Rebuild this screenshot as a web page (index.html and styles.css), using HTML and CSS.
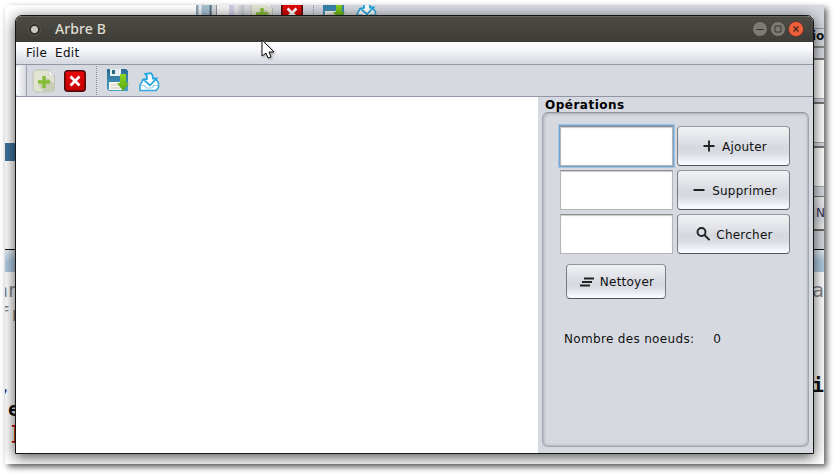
FILE: index.html
```html
<!DOCTYPE html>
<html lang="fr">
<head>
<meta charset="utf-8">
<title>Arbre B</title>
<link rel="stylesheet" href="styles.css">
</head>
<body>
<svg class="defs" aria-hidden="true">
  <defs>
    <linearGradient id="blue" x2="0" y2="1"><stop stop-color="#286b94"/><stop offset="1" stop-color="#4ba1c5"/></linearGradient>
    <linearGradient id="green" x2="0" y2="1"><stop stop-color="#8ed321"/><stop offset="1" stop-color="#58a914"/></linearGradient>
    <linearGradient id="red" x2="0" y2="1"><stop stop-color="#e80808"/><stop offset="1" stop-color="#c40000"/></linearGradient>
  </defs>
  <symbol id="new" viewBox="0 0 24 26">
    <path d="M4.500 2h12l6 6v12q0 4-4 4H5q-4 0-4-4V6q0-4 3.500-4z" fill="#e2e4d2" stroke="#b3b7ad" stroke-width=".8"/>
    <path d="M16 10l6.500 6v4q0 3.500-4 3.500h-7l-5-6 4-2v-5z" fill="#c9ccb5"/>
    <path d="M16.500 2l6 6-5-1z" fill="#fff" stroke="#c1c4c0" stroke-width=".6"/>
    <path d="M12 8v12M6 14h12" stroke="#86bd37" stroke-width="3.400"/>
  </symbol>
  <symbol id="close" viewBox="0 0 22 22">
    <rect x=".8" y=".8" width="20.400" height="20.400" rx="3" fill="url(#red)" stroke="#4b0909" stroke-width="1.500"/>
    <path d="M6.500 6.500l9 9M15.500 6.500l-9 9" stroke="#fff" stroke-width="2.800"/>
  </symbol>
  <symbol id="save" viewBox="0 0 24 24">
    <path d="M1 1h19l2 2v20H3l-2-2z" fill="url(#blue)"/>
    <path d="M4 1h11v7H4z" fill="#e8edef"/><path d="M6 2h3v4H6z" fill="#286987"/>
    <path d="M3 14h13v8H3z" fill="#f6f5ed"/><path d="M5 17h9M5 20h9" stroke="#c7c7bd"/>
    <path d="M14 6h6v9h3l-6 8-6-8h3z" fill="url(#green)"/>
  </symbol>
  <symbol id="export" viewBox="0 0 22 20">
    <path d="M5 8L2 13v5.500h16l2.500-3V11l-3-4.500" fill="#fff" stroke="#35a7dc" stroke-width="1.600"/>
    <path d="M2.500 13.500h4l1.500 2.500h6l1.500-2.500h5" fill="none" stroke="#8bcceb" stroke-width="1.200"/>
    <path d="M7.500 2l5.500-.8q2 1.500 2 5.300h3.500l-6.500 6.800-6.500-5.800 3.500-.5q.5-3-1.500-5z" fill="#fff" stroke="#22a5df" stroke-width="1.800"/>
  </symbol>
</svg>

<div class="desktop">
  <div class="strip">
    <i class="scroll"></i><i class="grip"></i>
    <svg class="s-new"><use href="#new"/></svg><svg class="s-close"><use href="#close"/></svg>
    <i class="s-dots"></i><svg class="s-save"><use href="#save"/></svg><svg class="s-export"><use href="#export"/></svg>
  </div>
  <div class="side">
    <b class="heading">io</b>
    <i class="cell c1"></i><i class="cell c2"></i><i class="cell c3"></i><i class="cell c4"></i>
    <span class="clipped">N</span>
  </div>
  <i class="selection"></i>
  <i class="band left"></i><i class="band right"></i>
  <span class="code gray an">an</span><span class="code gray fr">fr</span>
  <span class="code comma">,</span><span class="code e">e</span><span class="code bracket">;]</span>
  <span class="code gray a">a</span><span class="code i">i</span>
</div>

<main class="window">
  <header class="titlebar">
    <span class="orb"></span><h1>Arbre B</h1>
    <div class="controls">
      <svg viewBox="0 0 16 16"><circle cx="8" cy="8" r="7.500"/><path d="M4.500 8.500h7"/></svg>
      <svg viewBox="0 0 16 16"><circle cx="8" cy="8" r="7.500"/><path d="M5 5h6v6H5z"/></svg>
      <svg class="quit" viewBox="0 0 16 16"><circle cx="8" cy="8" r="7.500"/><path d="M5.500 5.500l5 5M10.500 5.500l-5 5"/></svg>
    </div>
  </header>
  <nav class="menu"><span>File</span><span>Edit</span></nav>
  <div class="toolbar">
    <i class="handle"></i>
    <svg class="new"><use href="#new"/></svg><svg class="close"><use href="#close"/></svg>
    <i class="dots"></i>
    <svg class="save"><use href="#save"/></svg><svg class="export"><use href="#export"/></svg>
  </div>
  <div class="content">
    <section class="canvas"></section>
    <aside class="operations">
      <h2>Opérations</h2>
      <div class="group">
        <div class="row"><input class="focused" aria-label="Ajouter"><button><svg viewBox="0 0 14 14"><path d="M7 1.500v11M1.500 7h11"/></svg>Ajouter</button></div>
        <div class="row"><input aria-label="Supprimer"><button><svg viewBox="0 0 14 14"><path d="M1.500 7h11"/></svg>Supprimer</button></div>
        <div class="row"><input aria-label="Chercher"><button><svg viewBox="0 0 14 14"><circle cx="5.500" cy="5" r="4"/><path d="M8.500 8l5 5"/></svg>Chercher</button></div>
        <button class="clear"><svg viewBox="0 0 14 14"><path d="M4 3.500h10M2 7h10M0 10.500h10"/></svg>Nettoyer</button>
        <p class="count"><span>Nombre des noeuds:</span><span>0</span></p>
      </div>
    </aside>
  </div>
</main>
<svg class="pointer" viewBox="0 0 13 20"><path d="M1 1v16l4-3 2 5 3-1-2-5h5z"/></svg>
</body>
</html>
```

FILE: styles.css
```css
* { box-sizing: border-box; }
body { margin: 0; width: 833px; height: 473px; overflow: hidden; position: relative; background: #fff; font: 12px "DejaVu Sans", sans-serif; color: #111; }
.defs { position: absolute; width: 0; height: 0; }
i { display: block; }

/* Desktop visible around the edges of the window */
.desktop { position: absolute; left: 5px; top: 5px; width: 819px; height: 459px; background: #fff; box-shadow: 3px 3px 6px rgba(0,0,0,.6); }
.desktop > *, .strip > *, .side > * { position: absolute; }
.strip { left: 191px; top: 0; width: 628px; height: 11px; overflow: hidden; background: #d6d9e0; }
.scroll { left: 0; top: 0; width: 21px; height: 11px; background: linear-gradient(90deg, #8fa4b5 0 2px, #eef2f6 3px 5px, #a5bfd1 6px 13px, #345064 15px, #d7dade 16px 20px, #8c96a2 20px); }
.grip { left: 21px; top: 0; width: 27px; height: 11px; background: linear-gradient(90deg, #f5f5f5 0 12px, #d0cee4 12px 17px, #eee 18px, #c4c6cc 26px); }
.s-new { left: 54px; top: -5px; width: 24px; height: 26px; }
.s-close { left: 85px; top: -3px; width: 22px; height: 22px; }
.s-dots { left: 117px; top: 0; height: 11px; border-left: 1px dotted #888d99; }
.s-save { left: 126px; top: -8px; width: 24px; height: 24px; }
.s-export { left: 159px; top: -4px; width: 22px; height: 20px; }
.side { left: 808px; top: 11px; width: 11px; height: 233px; overflow: hidden; background: #d6d9e0; }
.side::before { content: ""; position: absolute; top: 12px; width: 11px; height: 17px; border-top: 1px solid #9297a7; border-bottom: 2px solid #888; }
.heading { left: -1px; top: 13px; width: 12px; font-size: 12px; line-height: 15px; overflow: hidden; }
.cell { left: 0; width: 11px; height: 41px; border: 0 solid #aaa; border-top: 2px solid #777; border-bottom-width: 1px; background: #fff; }
.c1 { top: 42px; }
.c2 { top: 86px; }
.c3 { top: 130px; }
.c4 { top: 180px; height: 35px; background: linear-gradient(#f1f1f3, #d5d8df 60%, #eee); border-top-width: 1px; border-bottom: 2px solid #666; }
.clipped { left: 3px; top: 190px; width: 8px; line-height: 15px; overflow: hidden; color: #335; }
.selection { left: 0; top: 138px; width: 11px; height: 18px; background: #3f739b; }
.band { top: 244px; width: 11px; height: 23px; border-top: 1px solid #111; background: linear-gradient(#e5edf2, #b0cae0 50%); }
.left { left: 0; }
.right { left: 808px; }
.code { left: 0; width: 12px; height: 24px; font: 20px/24px "DejaVu Sans Mono", monospace; overflow: hidden; white-space: nowrap; }
.gray { color: #85858c; }
.an { top: 273px; text-indent: -9px; }
.fr { top: 297px; text-indent: -7px; }
.comma { top: 368px; text-indent: -6px; color: #236; }
.e { left: 3px; top: 392px; font-weight: bold; }
.code.bracket { top: 416px; text-indent: -8px; color: #c8000a; font-weight: bold; }
.a { left: 807px; top: 273px; }
.i { left: 807px; top: 368px; font-weight: bold; }

/* Application window */
.window { position: absolute; left: 15px; top: 15px; width: 799px; height: 439px; border: 1px solid #151515; border-radius: 7px 7px 0 0; overflow: clip; background: #d6d9e0; display: flex; flex-direction: column; box-shadow: 0 3px 14px rgba(0,0,0,.7); }
.titlebar { height: 26px; flex: none; background: linear-gradient(#4d4b44, #3d3c37); border-top: 1px solid #68665c; display: flex; align-items: center; padding: 0 9px 0 12px; color: #dfdbd2; }
.orb { width: 13px; height: 13px; border-radius: 50%; background: radial-gradient(circle, #cbc8c2 0 3px, #34332f 4px 5px, #55534d 6px); }
h1 { margin: -2px auto 0 14px; font: 500 14px/22px "Noto Sans", sans-serif; letter-spacing: .1px; }
.controls { display: flex; gap: 2px; margin-top: -1px; }
.controls svg { width: 16px; height: 16px; fill: #7c7a73; stroke: #35342f; stroke-width: 1; }
.controls .quit { fill: #ed6039; stroke: #54291e; }
.controls circle { stroke-width: .6; }
.controls .quit path { stroke-width: 1.5; }
.menu { height: 23px; flex: none; border-bottom: 1px solid #9297a6; background: linear-gradient(#fff 0, #f7f8fa 35%, #d8dbe2 90%); display: flex; gap: 8px; padding: 3px 10px; line-height: 16px; letter-spacing: .25px; }
.toolbar { height: 32px; flex: none; border-bottom: 1px solid #9297a6; display: flex; align-items: center; }
.handle { width: 11px; height: 31px; border-right: 1px solid #9ca1b0; border-radius: 4px 0 0 4px; background: linear-gradient(90deg, #fff, #d6d9e0); }
.new { width: 24px; height: 26px; margin: 0 0 0 5px; }
.close { width: 22px; height: 22px; margin-left: 8px; }
.dots { height: 29px; margin-left: 10px; border-left: 1px dotted #888d99; }
.save { width: 24px; height: 24px; margin: 0 0 1px 9px; }
.export { width: 22px; height: 20px; margin: 3px 0 0 8px; }
.content { flex: 1; display: flex; min-height: 0; }
.canvas { flex: 1; background: #fff; }
.operations { width: 275px; padding: 0 4px 6px; display: flex; flex-direction: column; }
h2 { margin: 0; padding-left: 3px; font: bold 12px/16px "DejaVu Sans", sans-serif; height: 15px; letter-spacing: .5px; color: #000; }
.group { flex: 1; border: 1px solid #a3a6ac; border-top-color: #909399; border-radius: 6px; box-shadow: inset 1px 1px 3px #aaaeb5, inset -1px -1px 2px #b5b9c0; padding: 13px 18px 0 17px; }
.row { display: flex; gap: 4px; height: 40px; margin-bottom: 4px; }
input { width: 113px; height: 40px; padding: 4px; border: 1px solid #b5b5b6; border-top-color: #8d8e91; border-radius: 0; background: #fff; box-shadow: inset 0 1px 1px #ccc; outline: none; }
.focused { box-shadow: 0 0 0 1px #73a4d1, 0 0 0 2px #a6c2df, inset 0 1px 1px #ccc; }
button { width: 113px; height: 40px; padding: 1px 0 0 2px; border: 1px solid #777b82; border-top-color: #93969c; border-bottom-color: #50545d; border-radius: 4px; background: linear-gradient(#f2f3f5, #d5d8df 55%, #d9dce3 70%, #f8faff 96%); font: 12px "DejaVu Sans", sans-serif; letter-spacing: .22px; color: #111; display: flex; align-items: center; justify-content: center; gap: 6px; }
button svg { width: 14px; height: 14px; margin-top: -1px; fill: none; stroke: #222; stroke-width: 1.9; }
.clear { width: 100px; height: 35px; margin: 10px 0 0 6px; }
.count { margin: 33px 0 0 4px; line-height: 15px; letter-spacing: .33px; display: flex; gap: 19px; }
.pointer { position: absolute; left: 261px; top: 39px; width: 13px; height: 20px; fill: #fff; stroke: #111; stroke-width: 1; filter: drop-shadow(1px 1px 1px #999); }
```
